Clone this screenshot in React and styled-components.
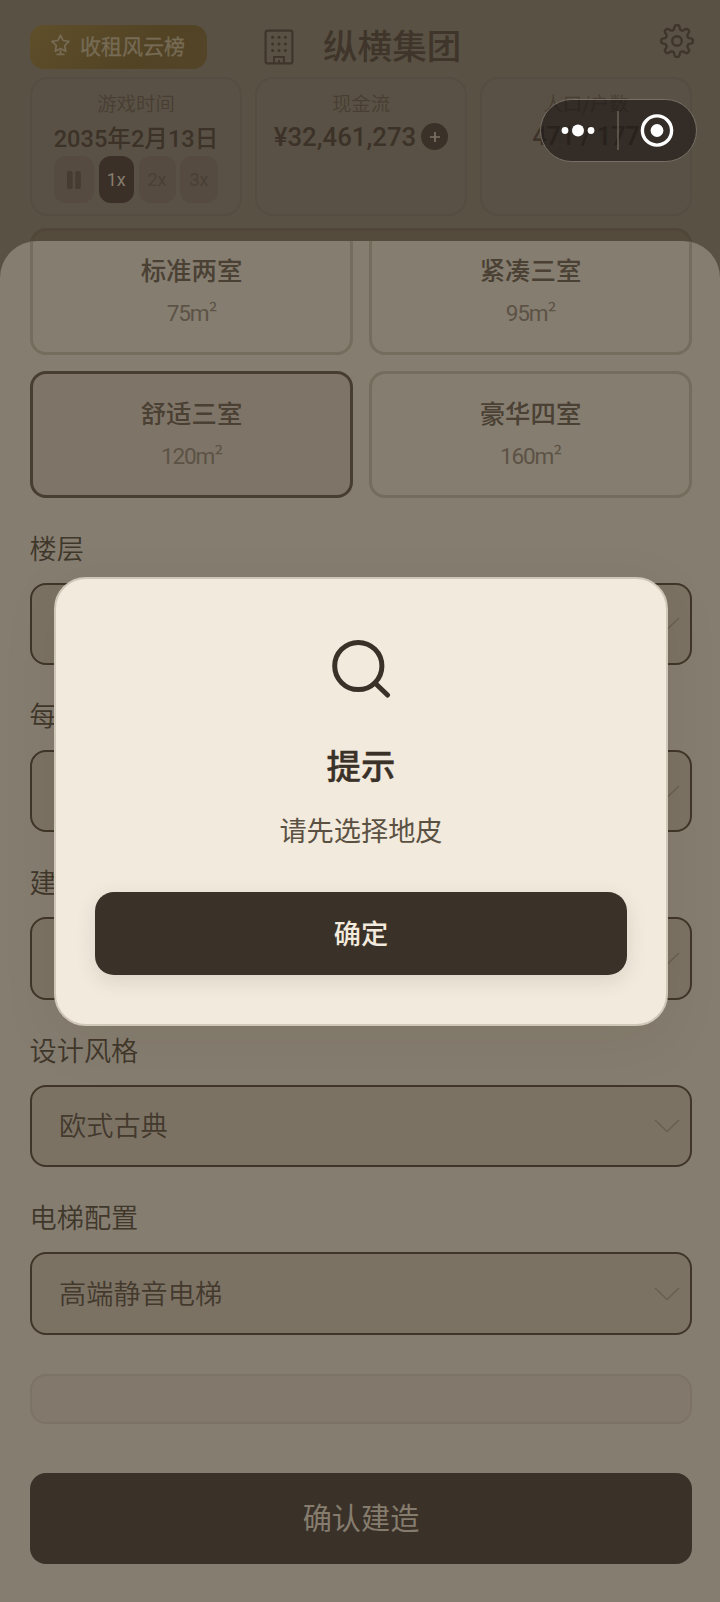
import React from 'react';
import styled, { createGlobalStyle } from 'styled-components';

const GlobalStyle = createGlobalStyle`
  * {
    box-sizing: border-box;
  }

  body {
    margin: 0;
    background: #595144;
    font-family: 'Noto Sans CJK SC', 'Noto Sans', sans-serif;
    color: #3a3128;
  }

  button {
    font-family: inherit;
    border: none;
    padding: 0;
  }
`;

const Screen = styled.div`
  position: relative;
  width: 720px;
  height: 1602px;
  overflow: hidden;
  background: #595144;
`;

// Game header
const Header = styled.header`
  height: 241px;
  padding: 24px 25px 0 30px;
`;

const TopBar = styled.div`
  display: flex;
  align-items: center;
  height: 45px;
`;

const RankButton = styled.button`
  display: flex;
  align-items: center;
  gap: 9px;
  width: 177px;
  height: 44px;
  padding: 0 0 4px 20px;
  border-radius: 14px;
  background: linear-gradient(135deg, #5f4f2a 0%, #524325 65%, #544529 100%);
  color: #766b55;
  font-size: 21px;
  line-height: 30px;
  white-space: nowrap;
  -webkit-text-stroke: 0.3px currentColor;
`;

const Company = styled.div`
  display: flex;
  align-items: center;
  gap: 29px;
  margin-left: 57px;
`;

const CompanyName = styled.h1`
  margin: -5px 0 0;
  color: #3f352a;
  font-size: 34.6px;
  font-weight: 500;
  line-height: 45px;
`;

const SettingsButton = styled.button`
  display: flex;
  margin: -11px 0 0 auto;
  background: none;
  color: #3f352a;
`;

const Stats = styled.div`
  display: grid;
  grid-template-columns: repeat(3, 212px);
  gap: 13px;
  margin-top: 8px;
`;

const StatCard = styled.div`
  display: flex;
  flex-direction: column;
  align-items: center;
  height: 139px;
  padding-top: 11px;
  border: 2px solid #554d41;
  border-radius: 18px;
  background: #595145;
`;

const StatLabel = styled.div`
  color: #483e32;
  font-size: 19.4px;
  font-weight: 350;
  line-height: 26px;
`;

const StatValue = styled.div`
  display: flex;
  align-items: center;
  gap: 5px;
  height: 38px;
  padding-top: 3px;
  color: #3c3228;
  font-family: Roboto, 'Noto Sans CJK SC', sans-serif;
  font-size: ${({ $size }) => $size || 23.6}px;
  font-weight: 500;
  white-space: nowrap;
`;

const AddCash = styled.span`
  display: flex;
  align-items: center;
  justify-content: center;
  width: 27px;
  height: 27px;
  border-radius: 50%;
  background: #3a3128;
  color: #7c7364;
`;

const SpeedRow = styled.div`
  display: flex;
  gap: 4.5px;
  margin-top: 2px;
`;

const SpeedButton = styled.button`
  display: flex;
  align-items: center;
  justify-content: center;
  width: ${({ $width }) => $width}px;
  height: 47px;
  border-radius: 12px;
  background: ${({ $active }) => ($active ? '#3a3028' : '#554b40')};
  color: ${({ $active }) => ($active ? '#857c6e' : '#4a4035')};
  font-family: Roboto, sans-serif;
  font-size: 18px;
`;

// Content card that the sheet slides over
const BehindCard = styled.div`
  width: 662px;
  height: 34px;
  margin-top: 12px;
  border: 3px solid #50463a;
  border-bottom: none;
  border-radius: 16px 16px 0 0;
  background: #544b3c;
`;

// Bottom sheet
const Sheet = styled.main`
  position: relative;
  height: 1361px;
  padding: 0 28px 0 30px;
  overflow: hidden;
  border-radius: 37px 37px 0 0;
  background: #857d70;
`;

const Options = styled.div`
  display: grid;
  grid-template-columns: 323px 323px;
  gap: 16px;
  margin-top: -13px;
`;

const Option = styled.div`
  display: flex;
  flex-direction: column;
  align-items: center;
  height: 127px;
  padding-top: 21px;
  border: 3px solid ${({ $selected }) => ($selected ? '#473e31' : '#746c5c')};
  border-radius: 16px;
  background: ${({ $selected }) => ($selected ? '#7e7568' : 'transparent')};
`;

const OptionName = styled.div`
  color: #4a4033;
  font-size: 25.4px;
  font-weight: 500;
  line-height: 34px;
`;

const OptionArea = styled.div`
  margin-top: 13px;
  color: #5c5245;
  font-family: Roboto, sans-serif;
  font-size: 22.6px;
  letter-spacing: -1.2px;
  line-height: 30px;
`;

const Squared = styled.span`
  font-family: 'Noto Sans CJK SC', sans-serif;
  font-size: 22px;
  line-height: 1;
`;

const Field = styled.div`
  height: 167.4px;
`;

const FieldLabel = styled.div`
  height: 54px;
  margin-left: -0.5px;
  color: #40372b;
  font-size: 27.2px;
  font-weight: 350;
  line-height: 36px;
`;

const Fields = styled.div`
  margin-top: 30.5px;
`;

const Select = styled.div`
  display: flex;
  align-items: center;
  justify-content: space-between;
  height: 82.5px;
  padding: 0 10px 3px 27px;
  border: 2px solid #3f3529;
  border-radius: 16px;
  background: #7b7264;
  color: #43392d;
  font-size: 27.2px;
  font-weight: 350;
`;

const EmptyPanel = styled.div`
  height: 50px;
  margin-top: 9px;
  border: 2px solid #7c7366;
  border-radius: 16px;
  background: #82796c;
`;

const BuildButton = styled.button`
  display: block;
  width: 100%;
  height: 90.5px;
  margin-top: 49px;
  padding-bottom: 5px;
  border-radius: 16px;
  background: #3a3128;
  color: #857c6e;
  font-size: 29.2px;
  font-weight: 400;
`;

// Mini program capsule in the top right corner
const Capsule = styled.div`
  position: absolute;
  top: 99px;
  right: 23px;
  display: flex;
  width: 157px;
  height: 63px;
  border: 1.5px solid #777066;
  border-radius: 32px;
  background: rgba(30, 23, 22, 0.64);
`;

// Dialog
const DialogLayer = styled.div`
  position: absolute;
  inset: 0;
  display: flex;
  align-items: center;
  justify-content: center;
  padding-left: 2px;
`;

const Dialog = styled.div`
  display: flex;
  flex-direction: column;
  align-items: center;
  width: 614px;
  height: 449px;
  padding: 60px 39px 0;
  border: 2px solid #cfc7b8;
  border-radius: 32px;
  background: #f2eadd;
  box-shadow: 0 14px 56px rgba(60, 48, 15, 0.08);
`;

const DialogTitle = styled.h2`
  margin: 43px 0 0;
  color: #3a3128;
  font-size: 34.4px;
  font-weight: 500;
  line-height: 44px;
  -webkit-text-stroke: 0.4px currentColor;
`;

const DialogMessage = styled.p`
  margin: 25px 0 0;
  color: #5b5143;
  font-size: 27.2px;
  line-height: 36px;
`;

const ConfirmButton = styled.button`
  width: 532px;
  height: 83px;
  margin-top: 45px;
  padding-bottom: 3px;
  border-radius: 19px;
  background: #3a3128;
  color: #f2eadd;
  font-size: 27.2px;
  font-weight: 500;
  box-shadow: 0 6px 20px rgba(59, 49, 30, 0.12);
`;

function TrophyStarIcon() {
  return (
    <svg width="21" height="24" viewBox="0 0 21 24" fill="none" stroke="currentColor" strokeWidth="1.7" strokeLinejoin="round" strokeLinecap="round">
      <path d="M10.5 2.2l2.6 5.3 5.9.9-4.3 4.1 1 5.8-5.2-2.7-5.2 2.7 1-5.8L2 8.4l5.9-.9z" />
      <path d="M10.5 17.5v3.5M7.2 21.4h6.6" />
    </svg>
  );
}

function BuildingIcon() {
  return (
    <svg width="30" height="36" viewBox="0 0 30 36" fill="none" stroke="#3f352a" strokeWidth="2.2">
      <rect x="1.6" y="1.6" width="26.8" height="32.8" rx="2" />
      <path d="M10 34v-6h10v6M15 31v3" strokeWidth="2" />
      {[8.3, 15, 21.5].map((y) =>
        [8.6, 15, 21.4].map((x) => <circle key={`${x}-${y}`} cx={x} cy={y} r="1.5" fill="#3f352a" stroke="none" />)
      )}
    </svg>
  );
}

// Closed outline with eight rounded teeth
const gearOutline = Array.from({ length: 160 }, (_, i) => {
  const angle = (i / 160) * Math.PI * 2;
  const radius = 13.7 + 2.3 * Math.tanh(1.8 * Math.cos(8 * angle));
  return `${(18 + radius * Math.cos(angle)).toFixed(2)},${(18 + radius * Math.sin(angle)).toFixed(2)}`;
}).join(' ');

function GearIcon() {
  return (
    <svg width="36" height="36" viewBox="0 0 36 36" fill="none" stroke="currentColor" strokeWidth="2.4" strokeLinejoin="round">
      <polygon points={gearOutline} />
      <circle cx="18" cy="18" r="4.8" />
    </svg>
  );
}

function PauseIcon() {
  return (
    <svg width="14" height="18" viewBox="0 0 14 18" fill="#463c31">
      <rect width="5.6" height="18" rx="1.5" />
      <rect x="8.2" width="5.6" height="18" rx="1.5" />
    </svg>
  );
}

function PlusIcon() {
  return (
    <svg width="12" height="12" viewBox="0 0 12 12" stroke="currentColor" strokeWidth="1.7">
      <path d="M6 1v10M1 6h10" />
    </svg>
  );
}

function ChevronIcon() {
  return (
    <svg width="26" height="18" viewBox="0 0 26 18" fill="none" stroke="#685f51" strokeWidth="1.5">
      <path d="M1 5l12 11.5L25 5" />
    </svg>
  );
}

function SearchIcon() {
  return (
    <svg width="60" height="60" viewBox="0 0 60 60" fill="none" stroke="#3a3128" strokeWidth="5" strokeLinecap="round">
      <circle cx="27.3" cy="27" r="23.6" />
      <path d="M44 44l12.5 12" />
    </svg>
  );
}

function CapsuleIcons() {
  return (
    <svg width="154" height="60" viewBox="0 0 154 60" fill="#fff">
      <circle cx="24" cy="30.5" r="3.4" />
      <circle cx="37" cy="30.5" r="6" />
      <circle cx="50" cy="30.5" r="3.4" />
      <path d="M77 11v39" stroke="#6d655b" strokeWidth="1.4" />
      <circle cx="116" cy="30.5" r="14.6" fill="none" stroke="#fff" strokeWidth="3.4" />
      <circle cx="116" cy="30.5" r="6.4" />
    </svg>
  );
}

const options = [
  { name: '标准两室', area: 75 },
  { name: '紧凑三室', area: 95 },
  { name: '舒适三室', area: 120, selected: true },
  { name: '豪华四室', area: 160 },
];

const fields = [
  { label: '楼层', value: '' },
  { label: '每', value: '' },
  { label: '建', value: '' },
  { label: '设计风格', value: '欧式古典' },
  { label: '电梯配置', value: '高端静音电梯' },
];

function App() {
  return (
    <Screen>
      <GlobalStyle />

      <Header>
        <TopBar>
          <RankButton>
            <TrophyStarIcon />
            收租风云榜
          </RankButton>
          <Company>
            <BuildingIcon />
            <CompanyName>纵横集团</CompanyName>
          </Company>
          <SettingsButton aria-label="设置">
            <GearIcon />
          </SettingsButton>
        </TopBar>

        <Stats>
          <StatCard>
            <StatLabel>游戏时间</StatLabel>
            <StatValue>2035年2月13日</StatValue>
            <SpeedRow>
              <SpeedButton $width={40}><PauseIcon /></SpeedButton>
              <SpeedButton $width={35.5} $active>1x</SpeedButton>
              <SpeedButton $width={37}>2x</SpeedButton>
              <SpeedButton $width={38}>3x</SpeedButton>
            </SpeedRow>
          </StatCard>
          <StatCard>
            <StatLabel>现金流</StatLabel>
            <StatValue $size={25.8}>
              ¥32,461,273
              <AddCash><PlusIcon /></AddCash>
            </StatValue>
          </StatCard>
          <StatCard>
            <StatLabel>人口/户数</StatLabel>
            <StatValue $size={25}>471 / 177</StatValue>
          </StatCard>
        </Stats>

        <BehindCard />
      </Header>

      <Sheet>
        <Options>
          {options.map((option) => (
            <Option key={option.name} $selected={option.selected}>
              <OptionName>{option.name}</OptionName>
              <OptionArea>
                {option.area}m<Squared>²</Squared>
              </OptionArea>
            </Option>
          ))}
        </Options>

        <Fields>
          {fields.map((field) => (
            <Field key={field.label}>
              <FieldLabel>{field.label}</FieldLabel>
              <Select>
                <span>{field.value}</span>
                <ChevronIcon />
              </Select>
            </Field>
          ))}
        </Fields>

        <EmptyPanel />
        <BuildButton>确认建造</BuildButton>
      </Sheet>

      <DialogLayer>
        <Dialog role="dialog">
          <SearchIcon />
          <DialogTitle>提示</DialogTitle>
          <DialogMessage>请先选择地皮</DialogMessage>
          <ConfirmButton>确定</ConfirmButton>
        </Dialog>
      </DialogLayer>

      <Capsule>
        <CapsuleIcons />
      </Capsule>
    </Screen>
  );
}

export default App;
